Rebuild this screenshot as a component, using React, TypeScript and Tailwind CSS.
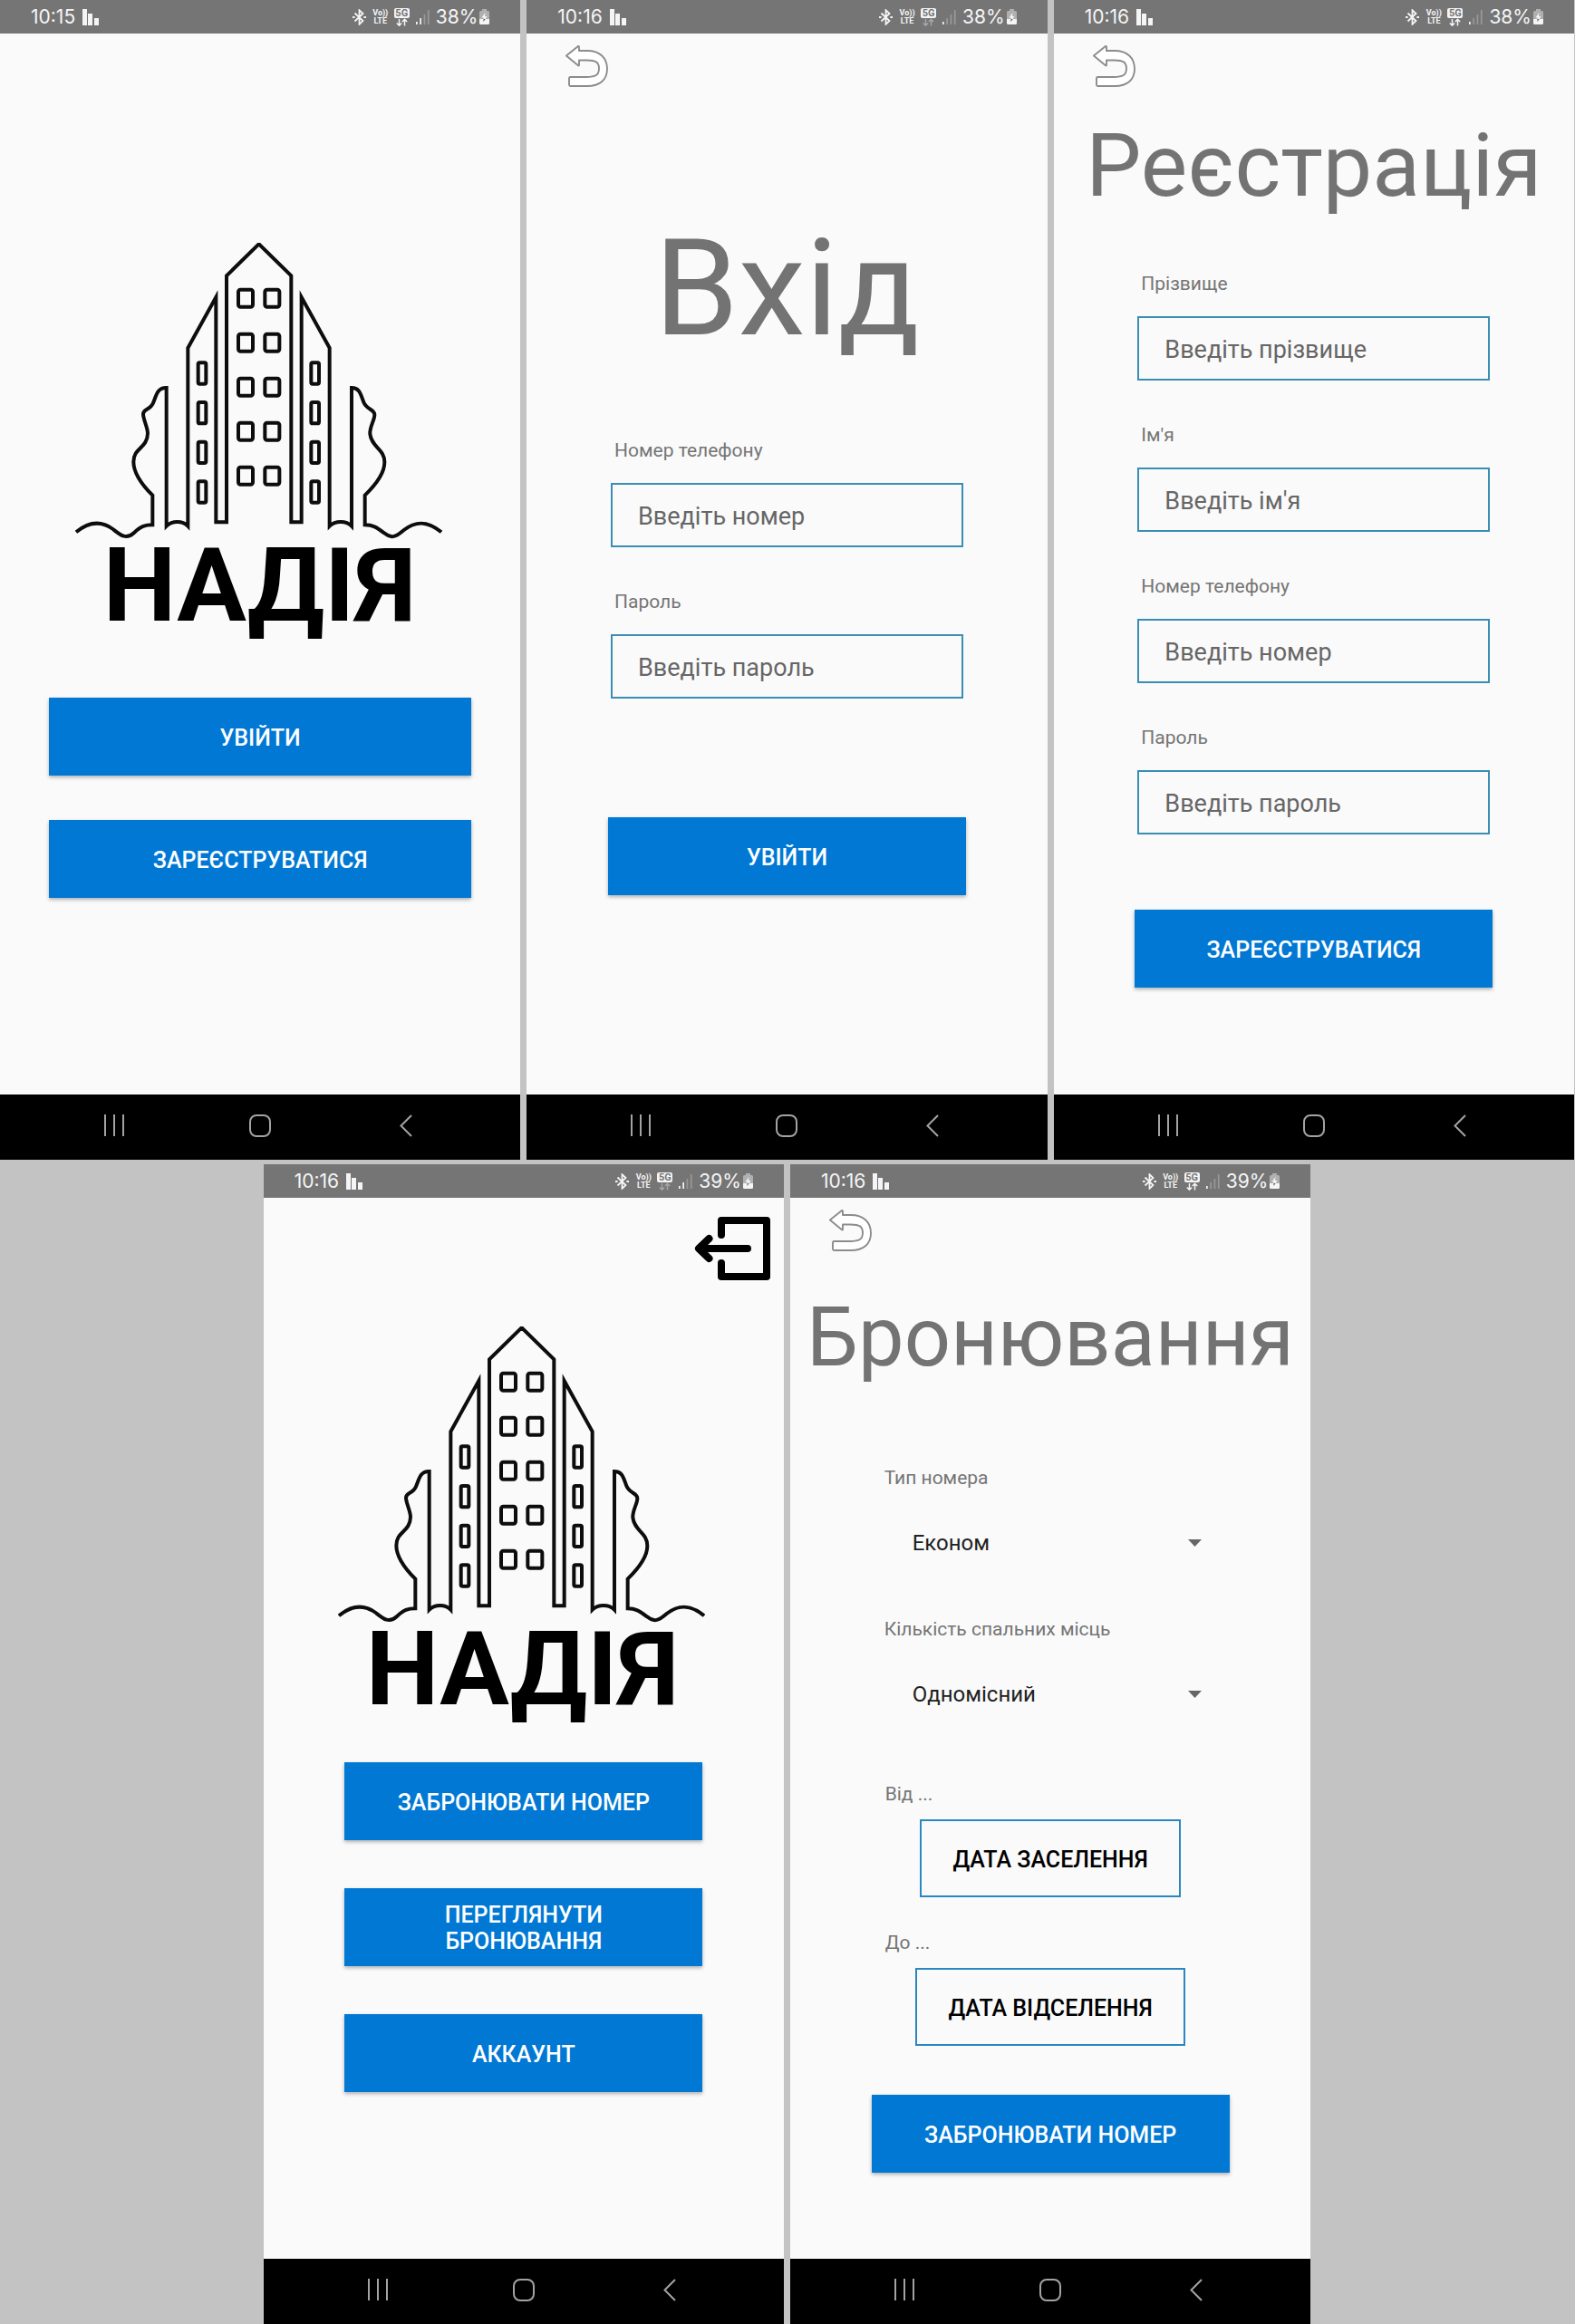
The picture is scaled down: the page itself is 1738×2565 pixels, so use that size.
import { ReactNode } from "react";

function StatusBar({ time, battery, bars, data }: { time: string; battery: string; bars: number; data: boolean }) {
  return (
    <header className="flex h-[37px] items-center justify-between bg-[#757575] px-[34px] font-[Inter,sans-serif] text-[21px] leading-6 text-[#f5f5f5]">
      <div className="flex items-center gap-2">
        <span>{time}</span>
        <svg width="18" height="18" viewBox="0 0 18 18" fill="currentColor" aria-hidden="true">
          <path d="M0 0h5v18H0zM6 5h5v13H6zM13 10h5v8h-5z" />
        </svg>
      </div>
      <div className="flex items-center">
        <svg className="mr-2" width="15" height="18" viewBox="0 0 15 18" fill="none" stroke="currentColor" strokeWidth="1.8" aria-hidden="true">
          <path d="M2.5 4.5 11.5 13 7.5 16.8V1.2L11.5 5 2.5 13.5" />
          <path d="M0 9h2.6M12.4 9H15" strokeWidth="2.2" />
        </svg>
        <span className="mr-[7px] flex w-4 flex-col items-center font-[Roboto,sans-serif] text-[9px] leading-[9px] font-bold">
          <span>Vo))</span>
          <span>LTE</span>
        </span>
        <span className="mr-[7px] flex w-[17px] flex-col items-center">
          <span className="w-full rounded-xs bg-[#f5f5f5] text-center font-[Roboto,sans-serif] text-[11px] leading-[11px] font-bold text-[#757575]">
            5G
          </span>
          <svg width="13" height="9" viewBox="0 0 13 9" fill="none" stroke={data ? "#f5f5f5" : "#a6a6a6"} strokeWidth="1.5" aria-hidden="true">
            <path d="M3.5 1v7M.8 5.5l2.7 2.7 2.7-2.7M9.5 8.500V1.500M6.800 4l2.700-2.700L12.200 4" />
          </svg>
        </span>
        <svg className="mr-[7px]" width="15" height="17" viewBox="0 0 15 17" aria-hidden="true">
          {[3, 7, 11, 16].map((h, i) => (
            <rect key={h} x={i * 4.3} y={17 - h} width="1.7" height={h} fill={i < bars ? "#f5f5f5" : "#999999"} />
          ))}
        </svg>
        <span className="mr-0.5">{battery}</span>
        <svg width="11" height="17" viewBox="0 0 11 17" aria-hidden="true">
          <path d="M3 0h5v2h1.500a1.500 1.500 0 0 1 1.500 1.500V11H0V3.500A1.500 1.500 0 0 1 1.500 2H3z" fill="#b0b0b0" />
          <path d="M0 11h11v4.500a1.500 1.500 0 0 1-1.500 1.500h-8A1.500 1.500 0 0 1 0 15.500z" fill="#f5f5f5" />
          <path d="M6.500 4 2.500 9.500h2.300L4.500 11h2L8.500 8H6z" fill="#f5f5f5" />
          <path d="M4.600 11h2l-2.200 3z" fill="#555" />
        </svg>
      </div>
    </header>
  );
}

function NavBar() {
  return (
    <nav className="grid h-[72px] grid-cols-3 place-items-center bg-black px-[46px] pb-1 text-[#a3a3a3]">
      <button type="button" aria-label="Останні програми">
        <svg width="23" height="24" viewBox="0 0 23 24" stroke="currentColor" strokeWidth="2" aria-hidden="true">
          <path d="M1 0v24M11 0v24M21 0v24" />
        </svg>
      </button>
      <button type="button" aria-label="Головний екран">
        <svg width="24" height="25" viewBox="0 0 24 25" fill="none" stroke="currentColor" strokeWidth="2" aria-hidden="true">
          <rect x="1" y="1" width="22" height="23" rx="7" />
        </svg>
      </button>
      <button type="button" aria-label="Назад">
        <svg width="14" height="25" viewBox="0 0 14 25" fill="none" stroke="currentColor" strokeWidth="2" aria-hidden="true">
          <path d="M13 1 1.500 12.500 13 24" />
        </svg>
      </button>
    </nav>
  );
}

type PhoneProps = {
  time: string;
  battery: string;
  bars: number;
  data: boolean;
  className: string;
  children: ReactNode;
};

function Phone({ time, battery, bars, data, className, children }: PhoneProps) {
  return (
    <section className={`flex min-w-0 flex-col bg-[#fafafa] ${className}`}>
      <StatusBar time={time} battery={battery} bars={bars} data={data} />
      <div className="flex h-[1171px] flex-col items-center">{children}</div>
      <NavBar />
    </section>
  );
}

function Logo() {
  const rows = [0, 1, 2, 3, 4];
  return (
    <svg className="mr-1 shrink-0" width="405" height="450" viewBox="67 57 1215 1350" role="img" aria-label="НАДІЯ">
      <g fill="none" stroke="#0d0d0d" strokeWidth="12">
        <path d="M70 1015C112 980 152 976 192 1005C216 1024 235 1042 262 1017C285 995 298 991 323 991V893C290 860 260 820 260 782C260 735 306 738 307 688C307 668 292 642 292 624C292 606 316 612 326 585C336 560 340 536 369 537V995C388 976 422 976 440 995V405L533 237V982H568V166L675 61L782 166V982H816V237L909 405V995C928 976 964 976 982 995V537C1010 537 1012 560 1022 585C1032 610 1058 608 1058 626C1058 644 1041 668 1043 690C1048 735 1091 738 1091 784C1091 820 1060 860 1026 893V991C1052 991 1064 998 1090 1018C1114 1038 1130 1030 1155 1008C1200 973 1240 982 1279 1015" />
        {rows.map((r) => (
          <g key={r}>
            <rect x="607" y={212 + r * 147} width="48" height="57" rx="7" />
            <rect x="695" y={212 + r * 147} width="48" height="57" rx="7" />
          </g>
        ))}
        {rows.slice(0, 4).map((r) => (
          <g key={r}>
            <rect x="474" y={454 + r * 131} width="26" height="70" rx="5" />
            <rect x="848" y={454 + r * 131} width="26" height="70" rx="5" />
          </g>
        ))}
      </g>
      <text x="677" y="1308" textAnchor="middle" fontSize="342" fontWeight="700" fontFamily="Roboto, sans-serif">
        НАДІЯ
      </text>
    </svg>
  );
}

function PrimaryButton({ children, className = "w-[395px]" }: { children: ReactNode; className?: string }) {
  return (
    <button
      type="button"
      className={`flex h-[86px] shrink-0 items-center justify-center bg-[#0078d4] px-10 pt-0.5 text-center text-[25px] leading-[29px] font-medium text-white shadow-[0_2px_4px_rgba(0,0,0,0.3)] ${className}`}
    >
      {children}
    </button>
  );
}

function BackButton() {
  return (
    <button type="button" aria-label="Повернутися" className="mt-[13px] ml-[43px] shrink-0 self-start">
      <svg width="47" height="46" viewBox="0 0 47 46" fill="#ffffff" stroke="#8c8c8c" strokeWidth="1.9" strokeLinejoin="round" aria-hidden="true">
        <path d="M.9 11.600 14 1Q15 .6 15 2V6H24C38 6 46 14 46 26C46 38 38 45 24 45H5.500Q4 45 4 43.500V36.500Q4 35 5.500 35H23C33 35 37 33 37 25.500C37 18.500 33 16.500 24 16.500H15V21.500Q15 23 14 22.300Z" />
      </svg>
    </button>
  );
}

function Field({ id, label, placeholder, type = "text" }: { id: string; label: string; placeholder: string; type?: string }) {
  return (
    <div className="flex flex-col">
      <label htmlFor={id} className="mb-6 pl-1 text-[21px] leading-6 text-[#757575]">
        {label}
      </label>
      <input
        id={id}
        type={type}
        placeholder={placeholder}
        className="h-[71px] w-full border-2 border-[#3a8db3] bg-transparent px-7 pt-0.5 text-[27px] text-[#444] placeholder:text-[#666]"
      />
    </div>
  );
}

function Picker({ id, label, options, className }: { id: string; label: string; options: string[]; className: string }) {
  return (
    <div className={`flex w-full flex-col ${className}`}>
      <label htmlFor={id} className="mb-9 pl-[14px] text-[21px] leading-6 text-[#757575]">
        {label}
      </label>
      <div className="relative">
        <select id={id} className="h-12 w-full appearance-none bg-transparent pr-14 pl-[45px] text-2xl text-[#212121]">
          {options.map((o) => (
            <option key={o}>{o}</option>
          ))}
        </select>
        <svg className="pointer-events-none absolute top-5 right-[31px]" width="15" height="8" viewBox="0 0 15 8" fill="#666" aria-hidden="true">
          <path d="M0 0h15L7.500 8z" />
        </svg>
      </div>
    </div>
  );
}

function DateField({ id, label, action, className }: { id: string; label: string; action: string; className: string }) {
  return (
    <div className={`flex w-full flex-col ${className}`}>
      <label htmlFor={id} className="mb-4 pl-[15px] text-[21px] leading-6 text-[#757575]">
        {label}
      </label>
      <button id={id} type="button" className="h-[86px] self-center border-2 border-[#2b87c0] px-[34px] pt-0.5 text-[25px] leading-[29px] font-medium text-black">
        {action}
      </button>
    </div>
  );
}

export default function App() {
  return (
    <main className="grid grid-cols-6 gap-x-[7px] gap-y-[5px] bg-[#c3c3c3] pr-px font-[Roboto,sans-serif]">
      <Phone time="10:15" battery="38%" bars={2} data className="col-span-2">
        <div className="mt-[231px] flex w-full flex-col items-center px-[54px]">
          <Logo />
          <PrimaryButton className="mt-[52px] w-full">УВІЙТИ</PrimaryButton>
          <PrimaryButton className="mt-[49px] w-full">ЗАРЕЄСТРУВАТИСЯ</PrimaryButton>
        </div>
      </Phone>

      <Phone time="10:16" battery="38%" bars={1} data={false} className="col-span-2">
        <BackButton />
        <h1 className="mt-[134px] text-[149px] leading-[176px] text-[#737373]">Вхід</h1>
        <form className="mt-[79px] flex w-[389px] flex-col gap-12">
          <Field id="login-phone" label="Номер телефону" placeholder="Введіть номер" type="tel" />
          <Field id="login-password" label="Пароль" placeholder="Введіть пароль" type="password" />
        </form>
        <PrimaryButton className="mt-[131px] w-[395px]">УВІЙТИ</PrimaryButton>
      </Phone>

      <Phone time="10:16" battery="38%" bars={1} data className="col-span-2">
        <BackButton />
        <h1 className="mt-[29px] text-[97px] leading-[116px] text-[#737373]">Реєстрація</h1>
        <form className="mt-[60px] flex w-[389px] flex-col gap-12">
          <Field id="reg-surname" label="Прізвище" placeholder="Введіть прізвище" />
          <Field id="reg-name" label="Ім'я" placeholder="Введіть ім'я" />
          <Field id="reg-phone" label="Номер телефону" placeholder="Введіть номер" type="tel" />
          <Field id="reg-password" label="Пароль" placeholder="Введіть пароль" type="password" />
        </form>
        <PrimaryButton className="mt-[83px] w-[395px]">ЗАРЕЄСТРУВАТИСЯ</PrimaryButton>
      </Phone>

      <Phone time="10:16" battery="39%" bars={2} data={false} className="col-span-2 col-start-2">
        <button type="button" aria-label="Вийти" className="mt-[21px] mr-[15px] shrink-0 self-end">
          <svg width="84" height="70" viewBox="0 0 84 70" fill="none" stroke="#000" strokeWidth="8" strokeLinecap="round" strokeLinejoin="round" aria-hidden="true">
            <path d="M30 20V4h50v62H30V51M59 35H6M16.500 24 5 35l11.500 11" />
          </svg>
        </button>
        <div className="mt-[51px] flex flex-col items-center">
          <Logo />
          <div className="mt-[31px] flex flex-col gap-[53px]">
            <PrimaryButton>ЗАБРОНЮВАТИ НОМЕР</PrimaryButton>
            <PrimaryButton>ПЕРЕГЛЯНУТИ БРОНЮВАННЯ</PrimaryButton>
            <PrimaryButton>АККАУНТ</PrimaryButton>
          </div>
        </div>
      </Phone>

      <Phone time="10:16" battery="39%" bars={1} data className="col-span-2">
        <BackButton />
        <h1 className="mt-[43px] text-[90px] leading-[106px] text-[#737373]">Бронювання</h1>
        <form className="flex w-[395px] flex-col items-center">
          <Picker id="room-type" label="Тип номера" options={["Економ"]} className="mt-[89px]" />
          <Picker id="beds" label="Кількість спальних місць" options={["Одномісний"]} className="mt-[59px]" />
          <DateField id="date-from" label="Від ..." action="ДАТА ЗАСЕЛЕННЯ" className="mt-[74px]" />
          <DateField id="date-to" label="До ..." action="ДАТА ВІДСЕЛЕННЯ" className="mt-[38px]" />
          <PrimaryButton className="mt-[54px] w-[395px]">ЗАБРОНЮВАТИ НОМЕР</PrimaryButton>
        </form>
      </Phone>
    </main>
  );
}
